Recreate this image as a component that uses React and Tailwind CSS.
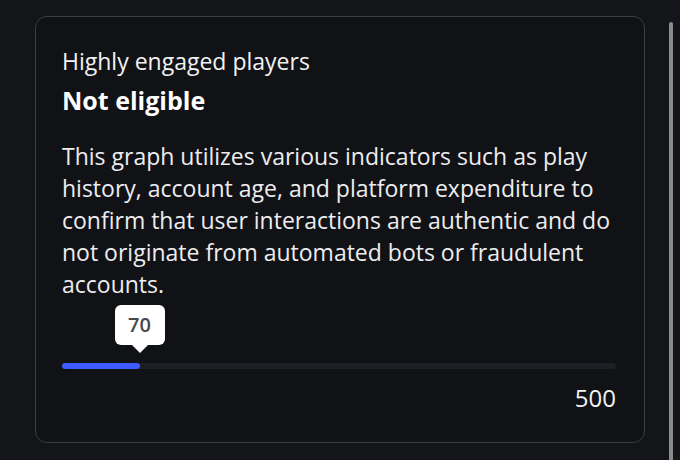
import React from "react";

const value = 70;
const max = 500;

const EngagementCard = () => {
  const pct = (value / max) * 100;

  return (
    <div className="ml-[35px] mt-4 h-[427px] w-[610px] rounded-xl border border-[#3c3d42] bg-[#111216] pl-[26px] pr-7 pt-7">
      <div className="text-[23px] leading-8 text-[#f2f2f4]">Highly engaged players</div>
      <div className="mt-[7px] text-[25px] font-bold leading-8 text-white">Not eligible</div>
      <p className="mt-6 text-[23px] leading-8 text-[#ededef]">
        This graph utilizes various indicators such as play history, account age, and platform
        expenditure to confirm that user interactions are authentic and do not originate from
        automated bots or fraudulent accounts.
      </p>

      {/* slider */}
      <div className="relative mt-[63px] h-[6px] rounded-full bg-[#1e1f24]">
        <div className="h-full rounded-full bg-[#3d5afe]" style={{ width: `${pct}%` }} />
        <div
          className="absolute bottom-[16px] flex -translate-x-1/2 flex-col items-center"
          style={{ left: `${pct}%` }}
        >
          <div className="flex h-[40px] w-[50px] items-center justify-center rounded-md bg-white text-[20px] font-semibold text-[#48484e]">
            {value}
          </div>
          <div className="h-0 w-0 border-x-[8px] border-t-[8px] border-x-transparent border-t-white" />
        </div>
      </div>
      <div className="mt-[13px] text-right text-[24px] leading-8 text-[#f2f2f4]">{max}</div>
    </div>
  );
};

export default function App() {
  return (
    <div
      className="flex h-[460px] w-[680px] bg-[#141519]"
      style={{ fontFamily: '"Open Sans", sans-serif' }}
    >
      <EngagementCard />
      <div className="ml-[24px] mt-[22px] h-[440px] w-[4px] rounded-full bg-[#8a8a8c]" />
    </div>
  );
}
